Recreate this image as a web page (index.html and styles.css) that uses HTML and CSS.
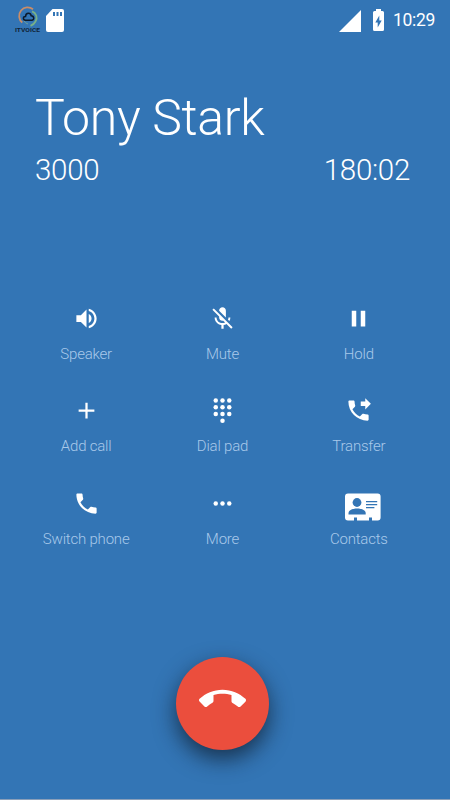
FILE: index.html
```html
<!DOCTYPE html>
<html lang="en">
<head>
  <meta charset="UTF-8">
  <meta name="viewport" content="width=device-width, initial-scale=1.0">
  <title>Call</title>
  <link rel="stylesheet" href="styles.css">
</head>
<body>
  <div class="screen">
    <header class="status-bar">
      <div class="status-left">
        <svg class="logo" width="28" height="28" viewBox="0 0 28 28">
          <g fill="none" stroke-width="1.8">
            <path d="M8.300 16.500A8.300 8.300 0 0 1 19 3.300" stroke="#c98d68"/>
            <path d="M18 5.300A6.800 6.800 0 0 1 21.500 15.500Q20 18.500 16.500 19.800" stroke="#78b088"/>
            <path d="M9.800 14.500A6.500 6.500 0 0 0 14 18" stroke="#6fa09a" stroke-width="1"/>
            <path d="M11.500 14.200c-3-.2-2.600-3.600 0-3.600.3-4.400 5.200-4.300 5.700-.8 3.200.2 3.300 4.400.6 4.400z" stroke="#0b1a2b" stroke-width="1.500"/>
          </g>
          <text x="1" y="26" textLength="25" lengthAdjust="spacingAndGlyphs">ITVOICE</text>
        </svg>
        <svg class="sd" width="18" height="23" viewBox="0 0 18 23">
          <path fill="#fff" d="M6.500 0H16a2 2 0 0 1 2 2v19a2 2 0 0 1-2 2H2a2 2 0 0 1-2-2V7z"/>
          <path fill="#3375b5" d="M7 3h2v4H7zm3.500 0h2v4h-2zM14 3h2v4h-2z"/>
        </svg>
      </div>
      <div class="status-right">
        <svg width="22" height="22" viewBox="0 0 22 22"><path fill="#fff" d="M22 0v22H0z"/></svg>
        <svg class="battery" width="11" height="22" viewBox="0 0 11 22">
          <path fill="#fff" d="M3 0h5v2h1.500A1.500 1.500 0 0 1 11 3.500v17a1.500 1.500 0 0 1-1.500 1.500h-8A1.500 1.500 0 0 1 0 20.500v-17A1.500 1.500 0 0 1 1.500 2H3z"/>
          <path fill="#3375b5" d="M6.300 6.500v5h2.400l-4 7v-5H2.300z"/>
        </svg>
        <span class="clock">10:29</span>
      </div>
    </header>

    <section class="caller">
      <h1>Tony Stark</h1>
      <div class="caller-info">
        <span class="number">3000</span>
        <span class="duration">180:02</span>
      </div>
    </section>

    <section class="actions">
      <button class="action">
        <svg class="icon" viewBox="0 0 24 24"><path d="M3 9v6h4l5 5V4L7 9H3zm13.500 3c0-1.770-1.020-3.290-2.500-4.030v8.050c1.480-.73 2.500-2.250 2.500-4.020zM14 3.230v2.060c2.890.86 5 3.540 5 6.710s-2.110 5.850-5 6.710v2.060c4.010-.91 7-4.490 7-8.770s-2.990-7.860-7-8.770z"/></svg>
        <span>Speaker</span>
      </button>
      <button class="action">
        <svg class="icon" viewBox="0 0 24 24"><path d="M19 11h-1.700c0 .74-.16 1.430-.43 2.050l1.230 1.230c.56-.98.9-2.090.9-3.280zm-4.020.17c0-.06.02-.11.02-.17V5c0-1.660-1.340-3-3-3S9 3.340 9 5v.18l5.980 5.990zM4.270 3L3 4.270l6.010 6.010V11c0 1.660 1.330 3 2.990 3 .22 0 .44-.03.65-.08l1.660 1.660c-.71.33-1.500.52-2.310.52-2.760 0-5.300-2.100-5.300-5.100H5c0 3.410 2.720 6.230 6 6.720V21h2v-3.280c.91-.13 1.770-.45 2.540-.9L19.730 21 21 19.730 4.270 3z"/></svg>
        <span>Mute</span>
      </button>
      <button class="action">
        <svg class="icon" viewBox="0 0 24 24"><path d="M6 19h4V5H6v14zm8-14v14h4V5h-4z"/></svg>
        <span>Hold</span>
      </button>

      <button class="action">
        <svg class="icon" viewBox="0 0 24 24"><path d="M19 13h-6v6h-2v-6H5v-2h6V5h2v6h6v2z"/></svg>
        <span>Add call</span>
      </button>
      <button class="action">
        <svg class="icon" viewBox="0 0 24 24">
          <circle cx="6" cy="3" r="2"/><circle cx="12" cy="3" r="2"/><circle cx="18" cy="3" r="2"/>
          <circle cx="6" cy="9" r="2"/><circle cx="12" cy="9" r="2"/><circle cx="18" cy="9" r="2"/>
          <circle cx="6" cy="15" r="2"/><circle cx="12" cy="15" r="2"/><circle cx="18" cy="15" r="2"/>
          <circle cx="12" cy="21" r="2"/>
        </svg>
        <span>Dial pad</span>
      </button>
      <button class="action">
        <svg class="icon" viewBox="0 0 24 24"><path d="M18 11l5-5-5-5v3h-4v4h4v3zm2 4.500c-1.250 0-2.450-.2-3.570-.57-.35-.11-.74-.03-1.020.24l-2.200 2.200c-2.830-1.440-5.150-3.750-6.590-6.590l2.200-2.210c.28-.26.36-.65.25-1C8.700 6.450 8.500 5.250 8.500 4c0-.55-.45-1-1-1H4c-.55 0-1 .45-1 1 0 9.390 7.610 17 17 17 .55 0 1-.45 1-1v-3.500c0-.55-.45-1-1-1z"/></svg>
        <span>Transfer</span>
      </button>

      <button class="action">
        <svg class="icon" viewBox="0 0 24 24"><path d="M20 15.500c-1.250 0-2.450-.2-3.570-.57-.35-.11-.74-.03-1.020.24l-2.200 2.200c-2.830-1.440-5.150-3.750-6.590-6.590l2.200-2.210c.28-.26.36-.65.25-1C8.700 6.450 8.500 5.250 8.500 4c0-.55-.45-1-1-1H4c-.55 0-1 .45-1 1 0 9.390 7.610 17 17 17 .55 0 1-.45 1-1v-3.500c0-.55-.45-1-1-1z"/></svg>
        <span>Switch phone</span>
      </button>
      <button class="action">
        <svg class="icon" viewBox="0 0 24 24"><circle cx="6" cy="12" r="2"/><circle cx="12" cy="12" r="2"/><circle cx="18" cy="12" r="2"/></svg>
        <span>More</span>
      </button>
      <button class="action">
        <svg class="icon icon-card" viewBox="0 0 36 28">
          <path d="M3 .5h29.600a3 3 0 0 1 3 3v21a3 3 0 0 1-3 3H27v-3h-3v3H12v-3H9v3H3a3 3 0 0 1-3-3v-21a3 3 0 0 1 3-3z"/>
          <g fill="#3375b5">
            <circle cx="12" cy="9.500" r="4.400"/>
            <path d="M3.500 21.500v-1.500c0-3.300 5-4.600 8.600-4.600s8.600 1.300 8.600 4.600v1.500z"/>
            <path d="M21 8h11.200v1.200H21zm0 3h11.200v1.200H21zm0 3h8.400v1.200H21z"/>
          </g>
        </svg>
        <span>Contacts</span>
      </button>
    </section>

    <footer class="call-bar">
      <button class="end-call">
        <svg width="47" height="47" viewBox="0 0 24 24"><path fill="#fff" d="M12 9c-1.600 0-3.150.25-4.600.72v3.100c0 .39-.23.74-.56.9-.98.49-1.870 1.120-2.660 1.850-.18.18-.43.28-.7.28-.28 0-.53-.11-.71-.29L.29 13.080c-.18-.17-.29-.42-.29-.7 0-.28.11-.53.29-.71C3.340 8.780 7.460 7 12 7s8.660 1.780 11.710 4.670c.18.18.29.43.29.71 0 .28-.11.53-.29.71l-2.480 2.480c-.18.18-.43.29-.71.29-.27 0-.52-.11-.7-.28-.79-.74-1.690-1.360-2.670-1.850-.33-.16-.56-.5-.56-.9v-3.100C15.150 9.250 13.600 9 12 9z"/></svg>
      </button>
    </footer>
  </div>
</body>
</html>
```
FILE: styles.css
```css
* { margin: 0; padding: 0; box-sizing: border-box; }
body {
  font-family: Roboto, sans-serif;
  background: #3375b5;
  color: #fff;
}
svg { display: block; }
button {
  background: none;
  border: none;
  color: inherit;
  font-family: inherit;
  cursor: pointer;
}
.screen {
  display: flex;
  flex-direction: column;
  width: 450px;
  height: 800px;
  overflow: hidden;
  border-bottom: 1px solid #8b9fb9;
}

/* Status bar */
.status-bar {
  display: flex;
  justify-content: space-between;
  height: 40px;
  padding: 6px 14px 0 14px;
}
.status-left, .status-right {
  display: flex;
  align-items: flex-start;
}
.logo text {
  font-size: 6px;
  font-weight: 700;
  fill: #102438;
}
.sd { margin: 3px 0 0 4px; }
.status-right { padding-top: 4px; }
.battery {
  margin-left: 12px;
  margin-top: -1px;
}
.clock {
  width: 43px;
  margin-left: 9px;
  font-size: 17.500px;
  letter-spacing: -0.3px;
  line-height: 20px;
}

/* Caller */
.caller {
  height: 262px;
  padding: 46px 40px 0 35px;
}
.caller h1 {
  font-size: 50px;
  font-weight: 300;
  letter-spacing: -0.35px;
  line-height: 64px;
  white-space: nowrap;
}
.caller-info {
  display: flex;
  justify-content: space-between;
  font-size: 29.500px;
  font-weight: 300;
  letter-spacing: -0.3px;
  line-height: 40px;
}

/* Action buttons */
.actions {
  display: grid;
  grid-template-columns: repeat(3, 1fr);
  grid-template-rows: 92px 93px 92px;
  width: 409px;
  margin-left: 18px;
}
.action {
  display: flex;
  flex-direction: column;
  align-items: center;
  justify-content: flex-start;
  padding-top: 3px;
}
.icon {
  width: 27px;
  height: 27px;
  fill: #fff;
}
.icon-card {
  width: 36px;
  height: 28px;
  margin: 3px 0 -4px 9px;
}
.action span {
  margin-top: 12px;
  font-size: 15px;
  font-weight: 300;
  letter-spacing: -0.2px;
  line-height: 20px;
  color: #a9c9ea;
}

/* End call */
.call-bar {
  display: flex;
  justify-content: center;
  padding: 78px 6px 0 0;
}
.end-call {
  display: flex;
  justify-content: center;
  width: 93px;
  height: 93px;
  padding-top: 19px;
  border-radius: 50%;
  background: #eb4e3d;
  box-shadow: 0 9px 22px rgba(15, 30, 45, 0.75);
}
```
